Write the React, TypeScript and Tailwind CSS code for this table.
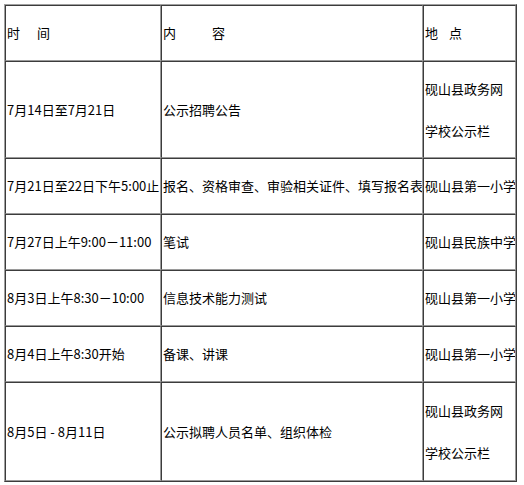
const rows: { time: string; content: string; place: string[]; h: string }[] = [
  { time: '7月14日至7月21日', content: '公示招聘公告', place: ['砚山县政务网', '学校公示栏'], h: 'h-[97px]' },
  { time: '7月21日至22日下午5:00止', content: '报名、资格审查、审验相关证件、填写报名表', place: ['砚山县第一小学'], h: 'h-[56px]' },
  { time: '7月27日上午9:00－11:00', content: '笔试', place: ['砚山县民族中学'], h: 'h-[56px]' },
  { time: '8月3日上午8:30－10:00', content: '信息技术能力测试', place: ['砚山县第一小学'], h: 'h-[56px]' },
  { time: '8月4日上午8:30开始', content: '备课、讲课', place: ['砚山县第一小学'], h: 'h-[56px]' },
  { time: '8月5日 - 8月11日', content: '公示拟聘人员名单、组织体检', place: ['砚山县政务网', '学校公示栏'], h: 'h-[99px]' },
];

const cell =
  'border border-t-[#3c3c3c] border-l-[#3c3c3c] border-b-[#9a9a9a] border-r-[#9a9a9a] align-middle text-left p-0 whitespace-pre overflow-hidden';

function Place({ lines }: { lines: string[] }) {
  return (
    <div className="flex flex-col gap-[28px]">
      {lines.map((l) => (
        <div key={l} className="leading-[14px]">
          {l}
        </div>
      ))}
    </div>
  );
}

export default function App() {
  return (
    <div
      className="bg-white w-[524px] h-[485px] pt-[4px] pl-[4px] text-[13px] text-black"
      style={{ fontFamily: '"Noto Sans CJK SC", "Noto Sans", sans-serif' }}
    >
      <table className="table-fixed border-separate border-spacing-0 w-[513px] border border-t-[#a0a0a0] border-l-[#a0a0a0] border-b-[#3c3c3c] border-r-[#3c3c3c]">
        <tbody>
          <tr>
            <td className={`${cell} w-[156px] h-[56px] pl-[1px]`}>
              <span>时</span>
              <span className="ml-[17px]">间</span>
            </td>
            <td className={`${cell} w-[262px] h-[56px] pl-[1px]`}>
              <span>内</span>
              <span className="ml-[36px]">容</span>
            </td>
            <td className={`${cell} w-[93px] h-[56px] pl-[1px]`}>
              <span>地</span>
              <span className="ml-[11px]">点</span>
            </td>
          </tr>
          {rows.map((r) => (
            <tr key={r.time}>
              <td className={`${cell} ${r.h} pl-[1px]`}>{r.time}</td>
              <td className={`${cell} ${r.h} pl-[1px]`}>{r.content}</td>
              <td className={`${cell} ${r.h} pl-[1px]`}>
                <Place lines={r.place} />
              </td>
            </tr>
          ))}
        </tbody>
      </table>
    </div>
  );
}
